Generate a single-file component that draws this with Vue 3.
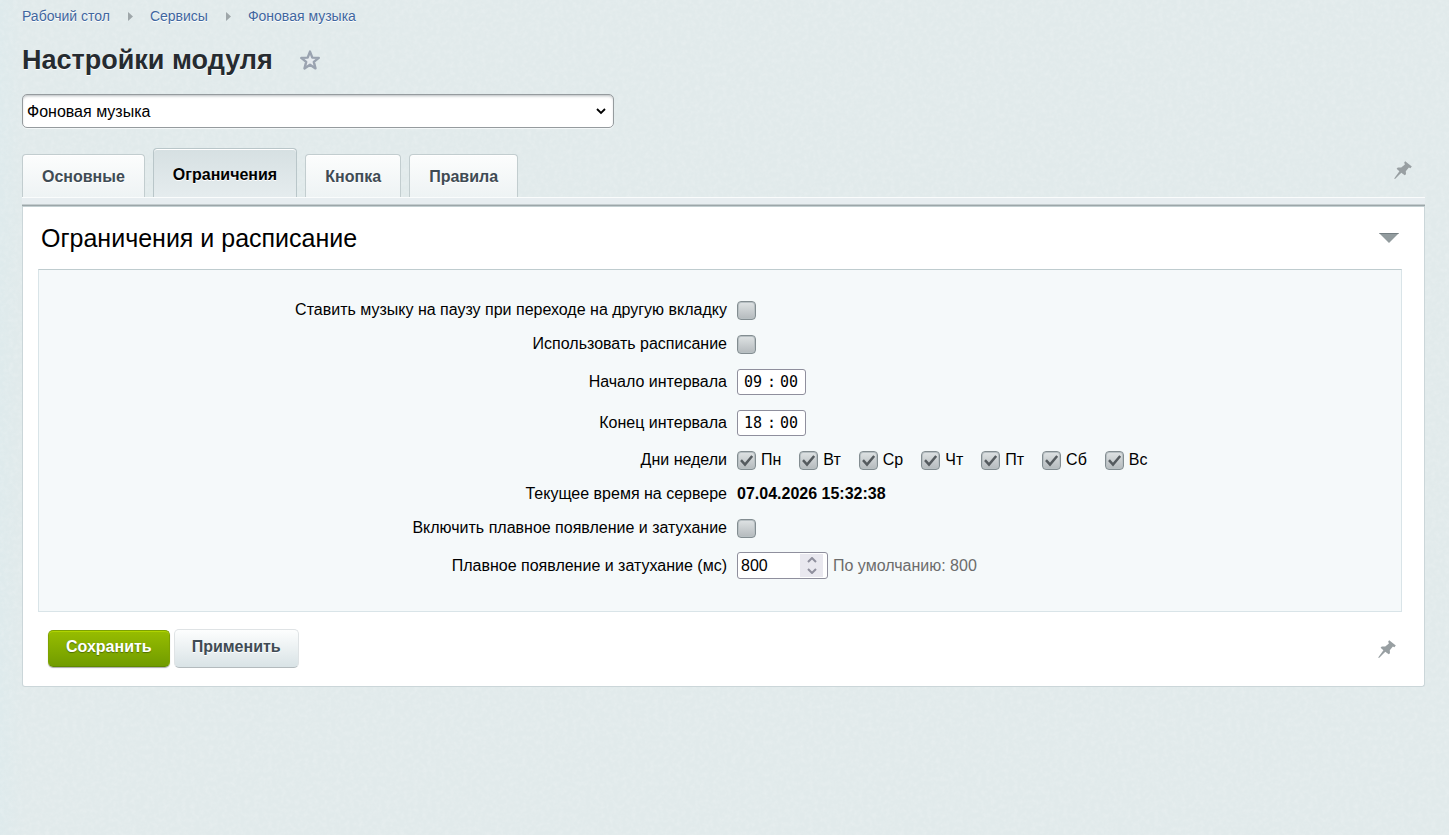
<script setup>
import { ref } from 'vue'

const crumbs = ['Рабочий стол', 'Сервисы', 'Фоновая музыка']
const tabs = ['Основные', 'Ограничения', 'Кнопка', 'Правила']
const activeTab = ref('Ограничения')
const pause = ref(false)
const schedule = ref(false)
const fade = ref(false)
const fadeMs = ref(800)
const times = ref([
  { id: 'start', label: 'Начало интервала', h: '09', m: '00' },
  { id: 'end', label: 'Конец интервала', h: '18', m: '00' }
])
const days = ref(['Пн', 'Вт', 'Ср', 'Чт', 'Пт', 'Сб', 'Вс'].map((name) => ({ name, on: true })))
</script>

<template>
  <div class="page">
    <svg class="grain" aria-hidden="true">
      <filter id="grain">
        <feTurbulence type="fractalNoise" baseFrequency="0.22" numOctaves="2" seed="4" />
        <feColorMatrix values="0 0 0 0 1  0 0 0 0 1  0 0 0 0 1  1.6 0 0 0 -0.62" />
      </filter>
      <rect width="100%" height="100%" filter="url(#grain)" />
    </svg>
    <main class="content">
      <nav class="crumbs">
        <template v-for="(c, i) in crumbs" :key="c">
          <svg v-if="i" class="crumb-arrow" width="5" height="9" viewBox="0 0 5 9"><path d="M0 0L5 4.5L0 9Z" fill="#9ea6a9" /></svg>
          <a href="#">{{ c }}</a>
        </template>
      </nav>

      <div class="heading">
        <h1>Настройки модуля</h1>
        <button class="icon-btn" type="button" aria-label="Добавить в избранное">
          <svg width="22" height="22" viewBox="0 0 22 22">
            <path d="M11 2.6L13.3 8.6L19.8 8.9L14.8 12.9L16.5 19.4L11 15.8L5.5 19.4L7.2 12.9L2.2 8.9L8.7 8.6Z" fill="#e6ebef" stroke="#9aa3b0" stroke-width="2.4" stroke-linejoin="round" />
          </svg>
        </button>
      </div>

      <div class="select-wrap">
        <select aria-label="Модуль"><option>Фоновая музыка</option></select>
        <svg class="select-arrow" width="10" height="7" viewBox="0 0 10 7"><path d="M1 1L5 5L9 1" fill="none" stroke="#000" stroke-width="1.8" /></svg>
      </div>

      <div class="tabbar">
        <div class="tabs" role="tablist">
          <button v-for="t in tabs" :key="t" type="button" role="tab" class="tab" :class="{ active: t === activeTab }" :aria-selected="t === activeTab" @click="activeTab = t">{{ t }}</button>
        </div>
        <button class="icon-btn pin" type="button" aria-label="Закрепить панель">
          <svg width="20" height="20" viewBox="0 0 20 20">
            <path d="M12.2 1.2L18.8 6.6L17.4 8.2L15.9 7.6L12.8 11.2L13 14.2L11.7 15.3L8.3 12.8L2 19L1.2 18.4L6.4 11.2L3.6 8.8L4.8 7.6L8.2 7.5L11.9 4.4L11.2 2.5Z" fill="#989fa2" />
          </svg>
        </button>
      </div>

      <section class="panel">
        <header class="panel-head">
          <h2>Ограничения и расписание</h2>
          <button class="icon-btn" type="button" aria-label="Свернуть">
            <svg width="20" height="10" viewBox="0 0 20 10"><path d="M0 0H20L10 10Z" fill="#929b9e" /><path d="M0 0H20L19 1H1Z" fill="#747e82" /></svg>
          </button>
        </header>

        <form class="fields" @submit.prevent>
          <div class="row">
            <label class="name" for="pause">Ставить музыку на паузу при переходе на другую вкладку</label>
            <div class="value"><input id="pause" v-model="pause" type="checkbox" /></div>
          </div>
          <div class="row">
            <label class="name" for="schedule">Использовать расписание</label>
            <div class="value"><input id="schedule" v-model="schedule" type="checkbox" /></div>
          </div>
          <div v-for="t in times" :key="t.id" class="row tall">
            <label class="name" :for="t.id">{{ t.label }}</label>
            <div class="value">
              <div class="time">
                <input :id="t.id" v-model="t.h" type="text" maxlength="2" />
                <span>:</span>
                <input v-model="t.m" type="text" maxlength="2" :aria-label="t.label + ', минуты'" />
              </div>
            </div>
          </div>
          <div class="row">
            <span class="name">Дни недели</span>
            <div class="value days">
              <label v-for="d in days" :key="d.name" class="day"><input v-model="d.on" type="checkbox" />{{ d.name }}</label>
            </div>
          </div>
          <div class="row">
            <span class="name">Текущее время на сервере</span>
            <div class="value"><b>07.04.2026 15:32:38</b></div>
          </div>
          <div class="row">
            <label class="name" for="fade">Включить плавное появление и затухание</label>
            <div class="value"><input id="fade" v-model="fade" type="checkbox" /></div>
          </div>
          <div class="row tall">
            <label class="name" for="fadems">Плавное появление и затухание (мс)</label>
            <div class="value">
              <div class="number">
                <input id="fadems" v-model="fadeMs" type="number" />
                <div class="spin">
                  <button type="button" aria-label="Больше" @click="fadeMs++"><svg width="10" height="6" viewBox="0 0 10 6"><path d="M1 5L5 1L9 5" /></svg></button>
                  <button type="button" aria-label="Меньше" @click="fadeMs--"><svg width="10" height="6" viewBox="0 0 10 6"><path d="M1 1L5 5L9 1" /></svg></button>
                </div>
              </div>
              <span class="hint">По умолчанию: 800</span>
            </div>
          </div>
        </form>

        <footer class="actions">
          <button type="button" class="btn save">Сохранить</button>
          <button type="button" class="btn">Применить</button>
          <button class="icon-btn pin-bottom" type="button" aria-label="Закрепить кнопки">
            <svg width="20" height="20" viewBox="0 0 20 20">
              <path d="M12.2 1.2L18.8 6.6L17.4 8.2L15.9 7.6L12.8 11.2L13 14.2L11.7 15.3L8.3 12.8L2 19L1.2 18.4L6.4 11.2L3.6 8.8L4.8 7.6L8.2 7.5L11.9 4.4L11.2 2.5Z" fill="#989fa2" />
            </svg>
          </button>
        </footer>
      </section>
    </main>
  </div>
</template>

<style>
body { background: #e1eaeb; }
</style>

<style scoped>
* { box-sizing: border-box; }
.page {
  position: relative;
  min-height: 100vh;
  font: 16px/20px "Liberation Sans", Arial, sans-serif;
  color: #000;
  background: linear-gradient(90deg, #deeaec, #e1eaeb 24px);
}
.grain { position: absolute; inset: 0; width: 100%; height: 100%; opacity: 0.2; }
.content { position: relative; padding: 8px 24px 24px 22px; }
button, input, select { font: inherit; margin: 0; }
.icon-btn { display: flex; padding: 0; border: 0; background: none; }

.crumbs { display: flex; align-items: center; height: 16px; font-size: 14px; line-height: 16px; }
.crumbs a { color: #3f669f; text-decoration: none; text-shadow: 0 1px #fff; }
.crumb-arrow { margin: 0 17px 0 18px; }

.heading { display: flex; align-items: center; gap: 26px; margin-top: 20px; height: 32px; }
h1 { margin: 0; font-size: 27px; line-height: 32px; color: #262b30; text-shadow: 0 1px #fff; }

.select-wrap { position: relative; width: 592px; max-width: 100%; margin-top: 18px; }
select {
  display: block; appearance: none; width: 100%; height: 34px; padding: 1px 24px 0 4px; color: #000;
  border: 1px solid #959b9e; border-radius: 5px; background: #fff;
  box-shadow: inset 0 2px 3px -1px #b4b9bb, 0 1px #f3f7f8;
}
.select-arrow { position: absolute; right: 8px; top: 14px; pointer-events: none; }

.tabbar {
  display: flex; justify-content: space-between; align-items: flex-end; margin-top: 20px; height: 59px;
  padding-bottom: 10px;
  background: linear-gradient(#fafcfc 1px, #e7edf0 1px, #e7edf0 7px, #c3ccce 7px, #c3ccce 8px, #9ca6a9 8px, #9ca6a9 9px, #c3cfd1 9px) bottom / 100% 10px no-repeat;
}
.tabs { display: flex; align-items: flex-end; gap: 8px; }
.tab {
  height: 43px; padding: 0 18px; font-weight: bold; color: #3f4b54; text-shadow: 0 1px #fff;
  border: 1px solid #c2cdcf; border-bottom: 0; border-radius: 4px 4px 0 0;
  background: linear-gradient(#fcfdfd, #eef3f4); box-shadow: inset 0 1px #fff;
}
.tabs .tab { padding: 0 18px; min-width: 96px; }
.tab:not(.active) { padding-top: 1px; }
.tab.active {
  height: 49px; color: #000; border-color: #b9c6c9;
  background: linear-gradient(#d6e0e2, #e5ecee); box-shadow: inset 0 1px #fff;
}
.tabs .tab { padding-left: 19px; padding-right: 19px; }
.tabs .tab.active { padding-top: 3px; }
.pin { margin: 0 12px 17px 0; }

.panel { background: #fff; border: 1px solid #cbd6d9; border-top: 0; border-radius: 0 0 3px 3px; }
.panel-head { display: flex; align-items: center; justify-content: space-between; height: 62px; padding: 0 25px 0 18px; }
h2 { margin: 0; font-size: 25px; line-height: 30px; font-weight: normal; }

.fields { margin: 0 22px 0 15px; padding: 23px 0 25px 24px; background: #f5f9fa; border: 1px solid #d9e4e8; border-top-color: #bfcccf; }
.row { display: grid; grid-template-columns: 1fr 1fr; column-gap: 10px; align-items: center; min-height: 34px; }
.row.tall { min-height: 41px; }
.name { text-align: right; }
.value { display: flex; align-items: center; }
input[type="checkbox"] {
  appearance: none; width: 19px; height: 19px; border: 1px solid #838d91; border-radius: 4px;
  background: linear-gradient(#dfe3e4, #b4babd); box-shadow: inset 0 0 0 1px #b8c0c3;
}
input[type="checkbox"]:checked {
  background:
    url("data:image/svg+xml,%3Csvg xmlns='http://www.w3.org/2000/svg' viewBox='0 0 17 17'%3E%3Cpath d='M3 8.2L7 12.5L14.2 4' fill='none' stroke='%23555b5f' stroke-width='2.5'/%3E%3C/svg%3E") center / 17px 17px no-repeat,
    linear-gradient(#dfe3e4, #b4babd);
}
.days { gap: 18px; }
.day { display: flex; align-items: center; gap: 5px; }
.time {
  display: flex; align-items: center; gap: 4px; height: 26px; padding: 0 6px; background: #fff;
  border: 1px solid #8f8f9d; border-radius: 3px; font: 15px/20px "DejaVu Sans Mono", monospace;
}
.time input { width: 19px; padding: 0; border: 0; background: none; color: #000; }
.number { display: flex; width: 91px; height: 27px; padding: 1px 4px 1px 3px; background: #fff; border: 1px solid #8f8f9d; border-radius: 3px; }
.number input { flex: 1; min-width: 0; padding: 0; border: 0; background: none; color: #000; appearance: textfield; }
.number input::-webkit-inner-spin-button { display: none; }
.spin { display: flex; flex-direction: column; width: 23px; background: #e9e8ef; }
.spin button { display: flex; flex: 1; align-items: center; justify-content: center; padding: 0; border: 0; background: none; }
.spin path { fill: none; stroke: #8f8f9d; stroke-width: 2; }
.hint { margin-left: 5px; color: #6c6c6c; }

.actions { display: flex; align-items: center; gap: 4px; padding: 17px 27px 18px 25px; }
.btn {
  height: 39px; padding: 0 17px 3px; font-weight: bold; color: #3f4b54; text-shadow: 0 1px #fff;
  border: 1px solid #dfe3e5; border-bottom-color: #b3babd; border-radius: 5px; background: linear-gradient(#fdfefe, #d9e3e6);
}
.btn.save {
  height: 37px; color: #fff; text-shadow: 0 1px 1px #4f7000; border-color: #7ea200; border-bottom-color: #5f8a00;
  background: linear-gradient(#97bd00, #719c00); box-shadow: inset 0 1px #b0d400, 0 1px 1px #aaa;
}
.pin-bottom { margin-left: auto; }
</style>
